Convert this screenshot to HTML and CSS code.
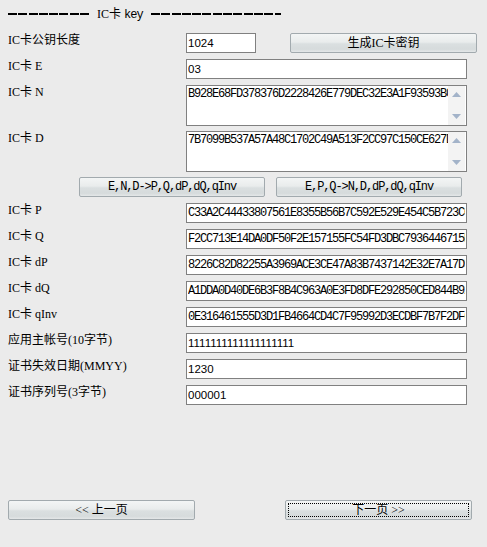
FILE: index.html
```html
<!DOCTYPE html>
<html lang="zh-CN">
<head>
<meta charset="utf-8">
<title>IC卡 key</title>
<link rel="stylesheet" href="styles.css">
</head>
<body>
<div class="page">
  <div class="title">
    <span class="dash dash-left"></span>
    <span class="title-text">IC卡 <span class="mono">key</span></span>
    <span class="dash dash-right"></span>
  </div>

  <div class="form">
    <div class="row">
      <span class="lbl">IC卡公钥长度</span>
      <div class="field">
        <input class="inp sans short" type="text" value="1024">
        <button class="btn gen" type="button">生成IC卡密钥</button>
      </div>
    </div>
    <div class="row">
      <span class="lbl">IC卡 E</span>
      <input class="inp sans" type="text" value="03">
    </div>
    <div class="row tall">
      <span class="lbl">IC卡 N</span>
      <div class="area">
        <div class="area-text hex">B928E68FD378376D2228426E779DEC32E3A1F93593B0C4D19A7E</div>
        <div class="sbar">
          <span class="sarrow"><svg width="9" height="5" viewBox="0 0 9 5"><path d="M0 5 L4.5 0 L9 5 Z" fill="#a3b3c9"/></svg></span>
          <span class="sarrow"><svg width="9" height="5" viewBox="0 0 9 5"><path d="M0 0 L4.5 5 L9 0 Z" fill="#a3b3c9"/></svg></span>
        </div>
      </div>
    </div>
    <div class="row tall">
      <span class="lbl">IC卡 D</span>
      <div class="area">
        <div class="area-text hex">7B7099B537A57A48C1702C49A513F2CC97C150CE627D3A8E51</div>
        <div class="sbar">
          <span class="sarrow"><svg width="9" height="5" viewBox="0 0 9 5"><path d="M0 5 L4.5 0 L9 5 Z" fill="#a3b3c9"/></svg></span>
          <span class="sarrow"><svg width="9" height="5" viewBox="0 0 9 5"><path d="M0 0 L4.5 5 L9 0 Z" fill="#a3b3c9"/></svg></span>
        </div>
      </div>
    </div>
    <div class="convert">
      <button class="btn conv" type="button">E,N,D-&gt;P,Q,dP,dQ,qInv</button>
      <button class="btn conv" type="button">E,P,Q-&gt;N,D,dP,dQ,qInv</button>
    </div>
    <div class="row">
      <span class="lbl">IC卡 P</span>
      <input class="inp hex" type="text" value="C33A2C44433807561E8355B56B7C592E529E454C5B723C0A">
    </div>
    <div class="row">
      <span class="lbl">IC卡 Q</span>
      <input class="inp hex" type="text" value="F2CC713E14DA0DF50F2E157155FC54FD3DBC7936446715B2">
    </div>
    <div class="row">
      <span class="lbl">IC卡 dP</span>
      <input class="inp hex" type="text" value="8226C82D82255A3969ACE3CE47A83B7437142E32E7A17D5C">
    </div>
    <div class="row">
      <span class="lbl">IC卡 dQ</span>
      <input class="inp hex" type="text" value="A1DDA0D40DE6B3F8B4C963A0E3FD8DFE292850CED844B92E">
    </div>
    <div class="row">
      <span class="lbl">IC卡 qInv</span>
      <input class="inp hex" type="text" value="0E316461555D3D1FB4664CD4C7F95992D3ECDBF7B7F2DF6A">
    </div>
    <div class="row">
      <span class="lbl">应用主帐号(10字节)</span>
      <input class="inp sans" type="text" value="1111111111111111111">
    </div>
    <div class="row">
      <span class="lbl">证书失效日期(MMYY)</span>
      <input class="inp sans" type="text" value="1230">
    </div>
    <div class="row">
      <span class="lbl">证书序列号(3字节)</span>
      <input class="inp sans" type="text" value="000001">
    </div>
  </div>

  <div class="nav">
    <button class="btn navbtn" type="button">&lt;&lt; 上一页</button>
    <button class="btn navbtn focused" type="button">下一页 &gt;&gt;</button>
  </div>
</div>
</body>
</html>
```
FILE: styles.css
```css
* { box-sizing: border-box; }

html, body {
  margin: 0;
  padding: 0;
  background: #ebebeb;
}

body {
  font-family: "Liberation Serif", "Noto Sans CJK SC", serif;
  font-size: 12px;
  color: #000;
}

.page {
  width: 487px;
  height: 547px;
  padding: 6px 0 0 8px;
  overflow: hidden;
}

.title {
  display: flex;
  align-items: center;
  height: 16px;
  line-height: 16px;
}

.dash {
  display: block;
  height: 2px;
  background: repeating-linear-gradient(to right, #000 0 9px, transparent 9px 10.3px);
}

.dash-left { width: 82px; }
.dash-right { width: 130px; }

.title-text {
  padding: 0 8px 0 7px;
  white-space: nowrap;
}

.mono {
  font-family: "Liberation Mono", monospace;
  font-size: 12px;
  letter-spacing: -1px;
}

.form {
  margin-top: 11px;
}

.row {
  display: grid;
  grid-template-columns: 178px 281px;
  height: 20px;
  margin-bottom: 6px;
}

.row.tall {
  height: 41px;
  margin-bottom: 5px;
}

.lbl {
  line-height: 14px;
  white-space: nowrap;
}

.field {
  display: flex;
  height: 20px;
}

.inp {
  display: block;
  width: 281px;
  height: 20px;
  margin: 0;
  padding: 0 1px;
  border: 1px solid #808080;
  border-radius: 0;
  background: #fff;
  color: #000;
  outline: none;
}

.inp.short { width: 70px; }

.sans {
  font-family: "Liberation Sans", sans-serif;
  font-size: 11.5px;
}

.hex {
  font-family: "Liberation Mono", monospace;
  font-size: 12px;
  letter-spacing: -1.2px;
}

.area {
  display: flex;
  width: 281px;
  height: 41px;
  border: 1px solid #808080;
  background: #fff;
}

.area-text {
  flex: 1;
  min-width: 0;
  overflow: hidden;
  white-space: nowrap;
  padding: 1px 0 0 1px;
  line-height: 14px;
}

.sbar {
  width: 17px;
  margin-right: 1px;
  display: flex;
  flex-direction: column;
  justify-content: space-between;
  background: #f3f3f3;
}

.sarrow {
  display: flex;
  align-items: center;
  justify-content: center;
  height: 17px;
}

.btn {
  margin: 0;
  padding: 0;
  height: 20px;
  border: 1px solid #a2aaae;
  border-radius: 2px;
  background: linear-gradient(to bottom, #f3f5f5 0%, #e9ecec 45%, #dadfe0 55%, #d6dbdc 85%, #e4e7e8 100%);
  font-family: "Liberation Serif", "Noto Sans CJK SC", serif;
  font-size: 12px;
  color: #000;
  line-height: 18px;
  white-space: nowrap;
}

.gen {
  width: 187px;
  margin-left: 34px;
  flex: none;
}

.convert {
  display: flex;
  gap: 11px;
  padding-left: 71px;
  height: 20px;
  margin: 2px 0 6px;
}

.conv {
  width: 186px;
  font-family: "Liberation Mono", "Noto Sans CJK SC", monospace;
  font-size: 12px;
  letter-spacing: -1.1px;
}

.nav {
  display: flex;
  justify-content: space-between;
  width: 464px;
  margin-top: 95px;
}

.navbtn {
  width: 187px;
}

.focused {
  outline: 1px dotted #000;
  outline-offset: -4px;
}
```
